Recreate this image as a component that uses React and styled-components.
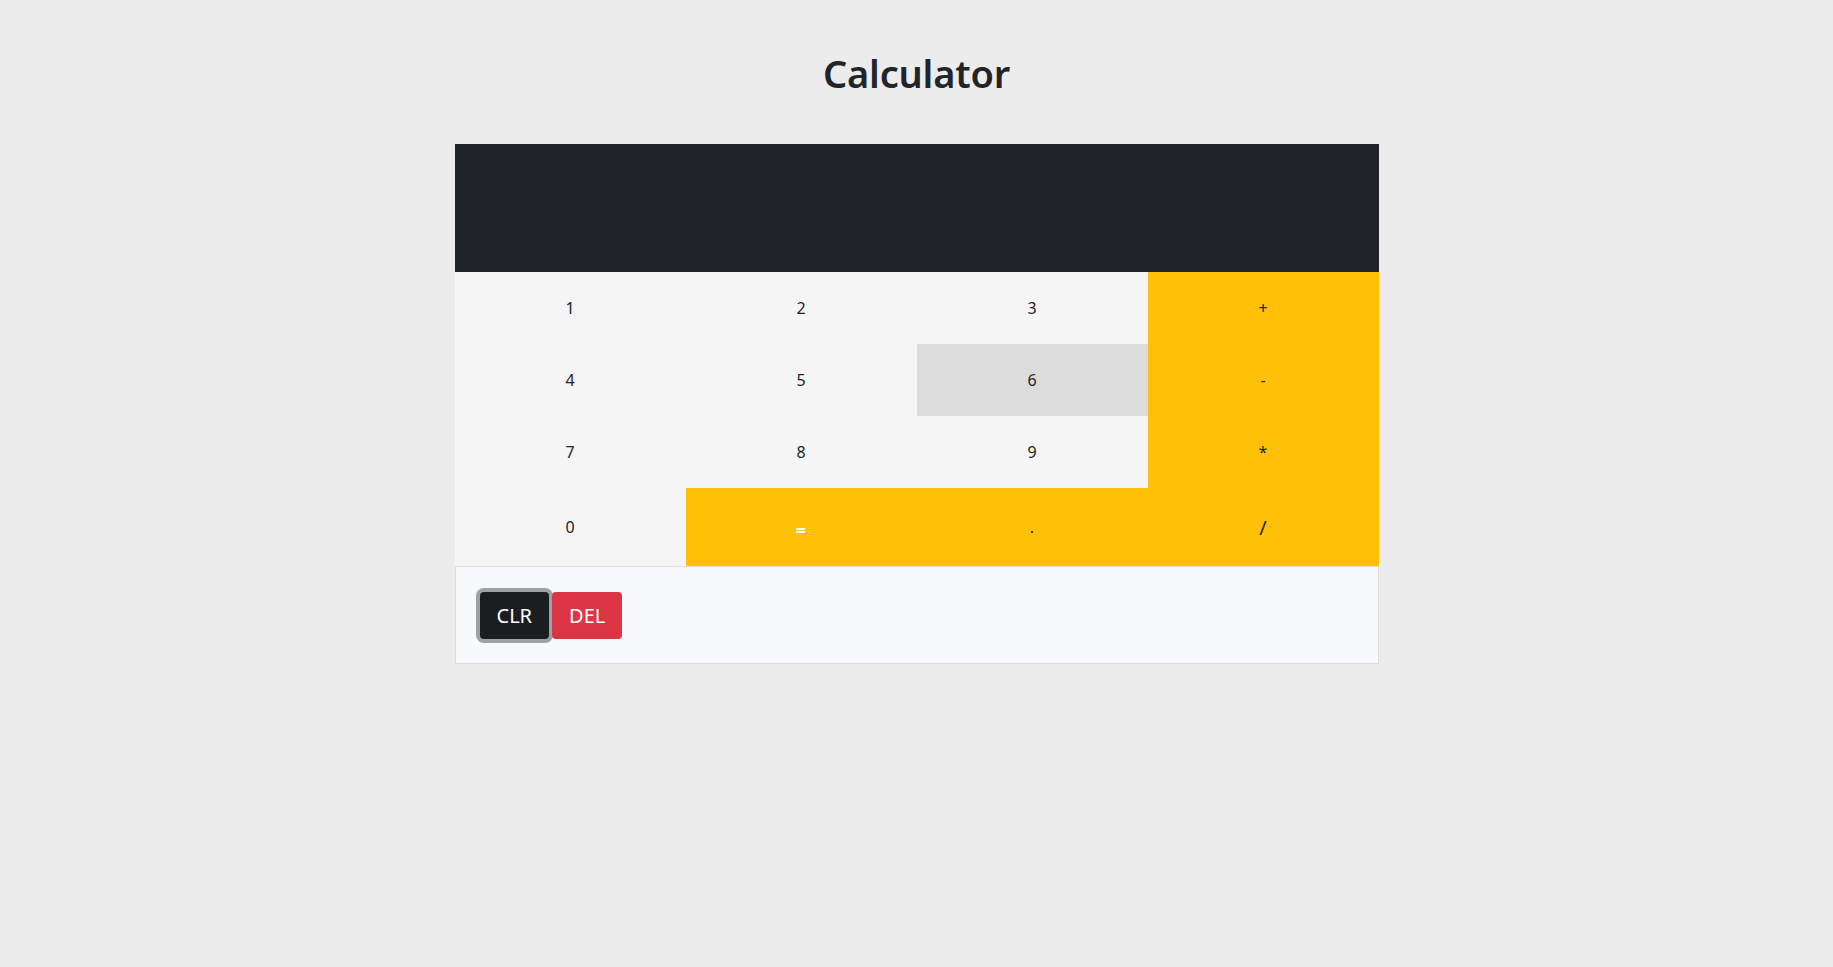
import React from 'react';
import styled, { createGlobalStyle, css } from 'styled-components';

const GlobalStyle = createGlobalStyle`
  body {
    margin: 0;
    background: #ececec;
    font-family: 'Noto Sans', 'Open Sans', sans-serif;
    color: #212529;
  }
`;

const Page = styled.div`
  display: flex;
  flex-direction: column;
  align-items: center;
  padding-top: 49px;
`;

const Title = styled.h1`
  margin: 0 0 47px;
  font-size: 38px;
  font-weight: 600;
  line-height: 48px;
  letter-spacing: -0.2px;
`;

const Card = styled.div`
  width: 924px;
  display: flex;
  flex-direction: column;
`;

const Display = styled.div`
  height: 128px;
  background: #212529;
`;

const Keypad = styled.div`
  display: grid;
  grid-template-columns: repeat(4, 1fr);
  grid-template-rows: 72px 72px 72px 78px;
`;

const Key = styled.button`
  border: 0;
  margin: 0;
  padding: 0;
  display: flex;
  align-items: center;
  justify-content: center;
  font-family: inherit;
  font-size: ${({ $big }) => ($big ? '20px' : '16px')};
  color: #212529;
  background: #f5f5f5;
  cursor: pointer;

  ${({ $accent }) =>
    $accent &&
    css`
      background: #ffc107;
    `}

  ${({ $active }) =>
    $active &&
    css`
      background: #dcdcdc;
    `}

  ${({ $equals }) =>
    $equals &&
    css`
      color: #fff;
      font-weight: 700;
      font-size: 18px;
      padding-top: 6px;
    `}
`;

const Footer = styled.div`
  display: flex;
  gap: 3px;
  padding: 25px 24px 24px;
  background: #f8f9fa;
  border: 1px solid #dcdcdc;
`;

const ActionButton = styled.button`
  height: 47px;
  padding: 0 17px;
  border: 0;
  border-radius: 4px;
  font-family: inherit;
  font-size: 20px;
  color: #fff;
  background: ${({ $variant }) => ($variant === 'danger' ? '#dc3545' : '#1b1e21')};
  box-shadow: ${({ $focused }) => ($focused ? '0 0 0 4px #a0a1a2' : 'none')};
  cursor: pointer;
`;

const keys = [
  { label: '1' },
  { label: '2' },
  { label: '3' },
  { label: '+', accent: true },
  { label: '4' },
  { label: '5' },
  { label: '6', active: true },
  { label: '-', accent: true },
  { label: '7' },
  { label: '8' },
  { label: '9' },
  { label: '*', accent: true },
  { label: '0' },
  { label: '=', accent: true, equals: true },
  { label: '.', accent: true },
  { label: '/', accent: true, big: true },
];

const App = () => (
  <>
    <GlobalStyle />
    <Page>
      <Title>Calculator</Title>
      <Card>
        <Display />
        <Keypad>
          {keys.map((k) => (
            <Key
              key={k.label}
              $accent={k.accent}
              $active={k.active}
              $equals={k.equals}
              $big={k.big}
            >
              {k.label}
            </Key>
          ))}
        </Keypad>
        <Footer>
          <ActionButton $focused>CLR</ActionButton>
          <ActionButton $variant="danger">DEL</ActionButton>
        </Footer>
      </Card>
    </Page>
  </>
);

export default App;
